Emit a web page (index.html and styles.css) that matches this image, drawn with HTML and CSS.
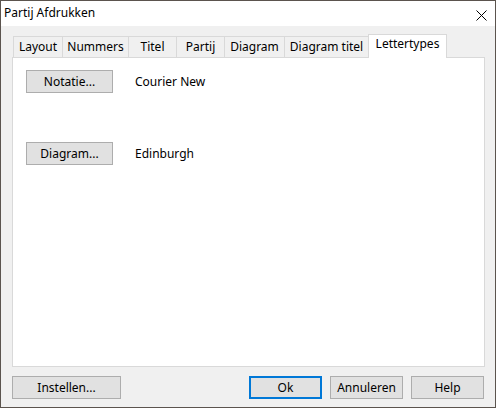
FILE: index.html
```html
<!DOCTYPE html>
<html>
<head>
<meta charset="utf-8">
<link rel="stylesheet" href="styles.css">
</head>
<body>
<div class="window">
  <div class="titlebar">
    <span class="title">Partij Afdrukken</span>
    <svg class="close" width="11" height="11" viewBox="0 0 11 11"><path d="M0.5 0.5 L10.5 10.5 M10.5 0.5 L0.5 10.5" stroke="#000" stroke-width="1" fill="none"/></svg>
  </div>
  <div class="body">
    <div class="tabs">
      <div class="tab w-layout">Layout</div>
      <div class="tab w-nummers">Nummers</div>
      <div class="tab w-titel">Titel</div>
      <div class="tab w-partij">Partij</div>
      <div class="tab w-diagram">Diagram</div>
      <div class="tab w-dtitel">Diagram titel</div>
      <div class="tab selected w-letter">Lettertypes</div>
    </div>
    <div class="panel">
      <div class="row">
        <button class="btn btn-font">Notatie...</button>
        <span class="label">Courier New</span>
      </div>
      <div class="row">
        <button class="btn btn-font">Diagram...</button>
        <span class="label">Edinburgh</span>
      </div>
    </div>
    <div class="footer">
      <button class="btn btn-wide">Instellen...</button>
      <div class="spacer"></div>
      <button class="btn btn-std btn-default">Ok</button>
      <button class="btn btn-std">Annuleren</button>
      <button class="btn btn-std">Help</button>
    </div>
  </div>
</div>
</body>
</html>
```
FILE: styles.css
```css
html, body {
  margin: 0;
  padding: 0;
  background: #3a332d;
}
body {
  font-family: "Noto Sans", "Open Sans", sans-serif;
  font-size: 12px;
  color: #000;
}
.window {
  width: 496px;
  height: 408px;
  box-sizing: border-box;
  border: 1px solid #5b544e;
  display: flex;
  flex-direction: column;
  background: #f0f0f0;
}
.titlebar {
  height: 25px;
  background: #fff;
  display: flex;
  align-items: center;
  padding-left: 3px;
  padding-right: 8px;
  box-sizing: border-box;
}
.title {
  flex: 1;
  line-height: 16px;
  padding-bottom: 1px;
}
.close {
  display: block;
  margin-top: 3px;
  margin-right: 0;
}
.body {
  flex: 1;
  display: flex;
  flex-direction: column;
  padding: 8px 10px 0 11px;
}
.tabs {
  display: flex;
  align-items: flex-end;
  height: 23px;
  padding-left: 1px;
}
.tab {
  box-sizing: border-box;
  height: 21px;
  border: 1px solid #d9d9d9;
  border-bottom: none;
  background: #f0f0f0;
  text-align: center;
  line-height: 19px;
  margin-left: -1px;
  white-space: nowrap;
}
.tab:first-child {
  margin-left: 0;
}
.tab.selected {
  height: 24px;
  background: #fff;
  margin-bottom: -1px;
  position: relative;
  z-index: 1;
  line-height: 18px;
}
.w-layout { width: 50px; }
.w-nummers { width: 67px; }
.w-titel { width: 49px; }
.w-partij { width: 49px; }
.w-diagram { width: 61px; }
.w-dtitel { width: 85px; }
.w-letter { width: 79px; }
.panel {
  flex: 1;
  background: #fff;
  border: 1px solid #d9d9d9;
  padding: 12px 13px;
  display: flex;
  flex-direction: column;
  gap: 49px;
}
.row {
  display: flex;
  align-items: center;
  height: 23px;
}
.label {
  margin-left: 22px;
}
.btn {
  box-sizing: border-box;
  height: 23px;
  background: #e1e1e1;
  border: 1px solid #adadad;
  font-family: inherit;
  font-size: 12px;
  color: #000;
  padding: 0;
  margin: 0;
  line-height: 19px;
}
.btn-font { width: 87px; }
.btn-wide { width: 109px; }
.btn-std { width: 73px; margin-left: 8px; }
.btn-default {
  border: 2px solid #0078d7;
  margin-left: 0;
}
.footer {
  height: 40px;
  box-sizing: border-box;
  padding-top: 9px;
  display: flex;
  align-items: flex-start;
  padding-right: 1px;
}
.spacer { flex: 1; }
```
